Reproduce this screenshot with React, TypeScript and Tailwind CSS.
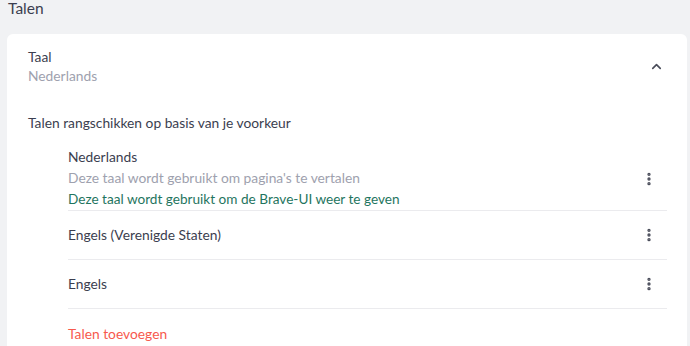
import { ChevronUp, EllipsisVertical } from 'lucide-react';

interface Language {
  name: string;
  lines?: { text: string; tone: 'muted' | 'ok' }[];
}

const LANGUAGES: Language[] = [
  {
    name: 'Nederlands',
    lines: [
      { text: "Deze taal wordt gebruikt om pagina's te vertalen", tone: 'muted' },
      { text: 'Deze taal wordt gebruikt om de Brave-UI weer te geven', tone: 'ok' },
    ],
  },
  { name: 'Engels (Verenigde Staten)' },
  { name: 'Engels' },
];

export default function App() {
  return (
    <div
      className="w-[690px] h-[346px] overflow-hidden bg-[#f1f2f4] pl-[7px] pr-[3px] text-[13.8px] text-[#3b3e4f]"
      style={{ fontFamily: 'Lato, "Noto Sans", sans-serif' }}
    >
      {/* Section title */}
      <div className="h-[34px] pl-px text-[15.5px] leading-[16px] text-[#3b3e4f]">Talen</div>

      <div className="bg-white rounded-t-md h-[312px]">
        {/* Header */}
        <div className="flex items-center justify-between pl-[21px] pr-[23px] pt-[13px]">
          <div className="flex flex-col">
            <span className="leading-[19px]">Taal</span>
            <span className="leading-[19px] text-[#9ea1ae]">Nederlands</span>
          </div>
          <ChevronUp className="w-[15px] h-[15px] text-[#4a4d5a]" strokeWidth={2.6} />
        </div>

        <div className="pl-[21px] mt-[28px] mb-[15px] leading-[19px]">
          Talen rangschikken op basis van je voorkeur
        </div>

        {/* Language list */}
        <div className="ml-[61px] mr-[20px]">
          {LANGUAGES.map((lang, i) => (
            <div
              key={lang.name}
              className={`flex items-center justify-between border-b border-[#ebebee] ${
                i === 0 ? 'h-[64px]' : 'h-[49px]'
              }`}
            >
              <div className="flex flex-col">
                <span className="leading-[20px]">{lang.name}</span>
                {lang.lines?.map((l) => (
                  <span
                    key={l.text}
                    className={`leading-[21px] ${
                      l.tone === 'muted'
                        ? 'text-[#9ea1ae]'
                        : 'text-[#1f7560] mt-px text-[13.6px]'
                    }`}
                  >
                    {l.text}
                  </span>
                ))}
              </div>
              <EllipsisVertical className="w-[16px] h-[16px] mr-[10px] text-[#4a4d5a]" strokeWidth={3} />
            </div>
          ))}
          <div className="h-[50px] flex items-center text-[#f7594d]">Talen toevoegen</div>
        </div>
      </div>
    </div>
  );
}
